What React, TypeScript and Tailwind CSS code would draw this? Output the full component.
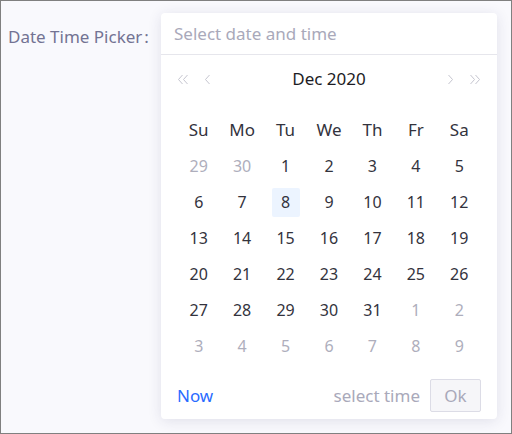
import React from 'react';

const weekDays = ['Su', 'Mo', 'Tu', 'We', 'Th', 'Fr', 'Sa'];

// Dec 2020 grid: [day, inMonth]
const cells: [number, boolean][] = [
  [29, false], [30, false],
  ...Array.from({ length: 31 }, (_, i) => [i + 1, true] as [number, boolean]),
  ...Array.from({ length: 9 }, (_, i) => [i + 1, false] as [number, boolean]),
];

function Chevron({ dir, double }: { dir: 'left' | 'right'; double?: boolean }) {
  const single = dir === 'left' ? 'M5.5 1 L1.5 5.5 L5.5 10' : 'M1.5 1 L5.5 5.5 L1.5 10';
  return (
    <svg width={double ? 12 : 7} height="11" viewBox={double ? '0 0 12 11' : '0 0 7 11'} fill="none">
      <path d={single} stroke="#c6c6d0" strokeWidth="1" />
      {double && (
        <path
          d={dir === 'left' ? 'M10.5 1 L6.5 5.5 L10.5 10' : 'M6.5 1 L10.5 5.5 L6.5 10'}
          stroke="#c6c6d0"
          strokeWidth="1"
        />
      )}
    </svg>
  );
}

export default function App() {
  return (
    <div
      className="w-[512px] h-[434px] border border-[#808080] bg-[#f9f9fd] flex items-start pt-[12px]"
      style={{ fontFamily: '"Noto Sans", "Open Sans", sans-serif' }}
    >
      {/* Label */}
      <div className="w-[160px] pl-[7px] pt-[12px] text-[17px] leading-[24px] text-[#737393]">
        Date Time Picker<span className="ml-[2px]">:</span>
      </div>

      {/* Picker panel */}
      <div className="w-[336px] h-[406px] bg-white rounded-[4px] shadow-[0_2px_14px_rgba(40,40,90,0.12)] flex flex-col">
        <div className="h-[42px] px-[13px] flex items-center border-b border-[#e6e6ec] text-[17px] text-[#a9a9ba]">
          Select date and time
        </div>

        {/* Month header */}
        <div className="h-[48px] px-[16px] flex items-center">
          <div className="flex items-center gap-[15px]">
            <Chevron dir="left" double />
            <Chevron dir="left" />
          </div>
          <div className="flex-1 text-center text-[17px] text-[#1c1c24]">Dec 2020</div>
          <div className="flex items-center gap-[15px]">
            <Chevron dir="right" />
            <Chevron dir="right" double />
          </div>
        </div>

        {/* Days */}
        <div className="mt-[9px] px-[16px] grid grid-cols-7 text-[16px]">
          {weekDays.map((d) => (
            <div key={d} className="h-[36px] flex items-center justify-center text-[17px] text-[#33333d]">
              {d}
            </div>
          ))}
          {cells.map(([day, inMonth], idx) => {
            const selected = inMonth && day === 8;
            return (
              <div key={idx} className="h-[36px] flex items-center justify-center">
                <span
                  className={`w-[28px] h-[29px] flex items-center justify-center rounded-[2px] ${
                    selected ? 'bg-[#ecf4ff] text-[#111]' : ''
                  } ${inMonth ? 'text-[#33333d]' : 'text-[#aeaebc]'}`}
                >
                  {day}
                </span>
              </div>
            );
          })}
        </div>

        {/* Footer */}
        <div className="mt-auto mb-[7px] px-[16px] flex items-center text-[17px]">
          <span className="text-[#2a6bff]">Now</span>
          <span className="ml-auto text-[#a9a9ba]">select time</span>
          <button className="ml-[10px] w-[51px] h-[33px] rounded-[2px] border border-[#dcdce6] bg-[#f6f6f9] text-[#a9a9ba] flex items-center justify-center">
            Ok
          </button>
        </div>
      </div>
    </div>
  );
}
